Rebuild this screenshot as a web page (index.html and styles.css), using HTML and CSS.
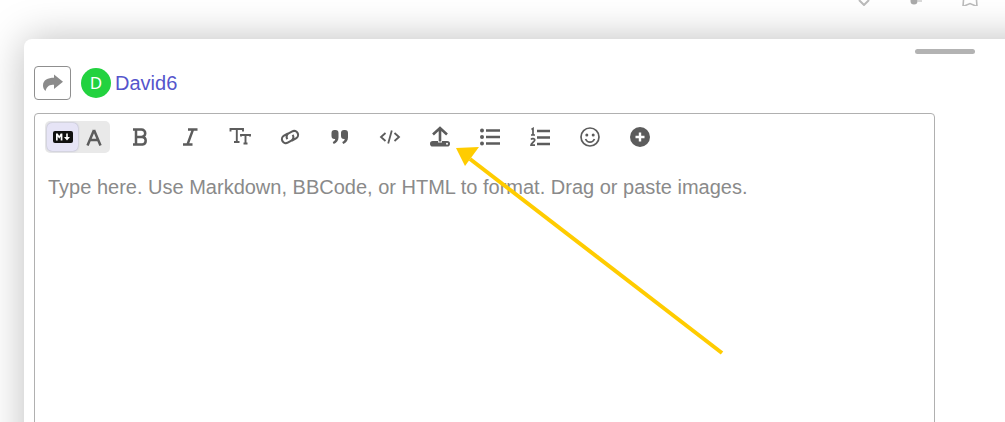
FILE: index.html
```html
<!DOCTYPE html>
<html lang="en">
<head>
<meta charset="utf-8">
<title>Composer</title>
<link rel="stylesheet" href="styles.css">
</head>
<body>
<div class="page">
  <div class="top-icons">
    <svg class="top-icon" width="16" height="6" viewBox="0 0 16 6"><path d="M3 0l5 5 5-5" fill="none" stroke="#bbb" stroke-width="2"/></svg>
    <svg class="top-icon" width="20" height="6" viewBox="0 0 20 6"><circle cx="10" cy="1" r="3.500" fill="#aaa"/><path d="M13 1h5" stroke="#ccc" stroke-width="1.500"/></svg>
    <svg class="top-icon star" width="18" height="6" viewBox="0 0 18 6"><path d="M2.500 0L2 6.500l7-3 7 3-.5-6.500" fill="none" stroke="#bbb" stroke-width="1.600"/></svg>
  </div>
  <section class="panel">
    <div class="grip"></div>
    <div class="head">
      <button class="reply-btn" type="button">
        <svg width="22" height="18" viewBox="0 0 22 18"><path d="M12 0.500l9 7.200-9 7.200v-4.200c-4 0-7 .8-8.500 6.300C1.800 15.500 1 13.500 1 11.500 1 6 6 3.800 12 3.800z" fill="#8b8b8b"/></svg>
      </button>
      <span class="avatar">D</span>
      <a class="user" href="#">David6</a>
    </div>
    <div class="editor">
      <div class="toolbar">
        <div class="mode-switch">
          <span class="mode mode-on">
            <svg width="20" height="12" viewBox="0 0 20 12"><rect width="20" height="12" rx="2" fill="#111"/><path d="M3 9.500V2.500h1.700L6.200 5l1.500-2.500h1.700v7H7.700V5.500L6.200 7.700 4.700 5.500v4z" fill="#fff"/><path d="M13.200 2.500h1.600V6H17l-3 3.500L11 6h2.200z" fill="#fff"/></svg>
          </span>
          <span class="mode">
            <svg width="18" height="18" viewBox="0 0 18 18"><path d="M9 2l6.500 15.500M9 2L2.500 17.500M5 12h8" fill="none" stroke="#5c5c5c" stroke-width="2.500"/></svg>
          </span>
        </div>
        <span class="tool tool-first"><svg width="20" height="20" viewBox="0 0 20 20"><path d="M3 2.500h8.500a3.700 3.700 0 0 1 0 7.500H6M6 10h6.500a3.800 3.800 0 0 1 0 7.500H3M6 2.500v15" fill="none" stroke="#5c5c5c" stroke-width="2.500"/></svg></span>
        <span class="tool"><svg width="20" height="20" viewBox="0 0 20 20"><path d="M8 2.500h9.500M3 17.500h9.500M13 2.500L7.500 17.500" fill="none" stroke="#5c5c5c" stroke-width="2.400"/></svg></span>
        <span class="tool"><svg width="22" height="20" viewBox="0 0 22 20"><path d="M1.500 4.500V2h12.500v2.500M7.800 2v13M5 15h5.500M12 9.500V8h9v1.500M16.500 8v8.500M14.500 16.500h4" fill="none" stroke="#5c5c5c" stroke-width="1.900"/></svg></span>
        <span class="tool"><svg width="22" height="20" viewBox="0 0 22 20"><path d="M9 6.500L5 8.700a3.900 3.900 0 0 0 3.700 6.900l3.700-2a3.900 3.900 0 0 0 1.200-5.800M13 13.500l4-2.200a3.900 3.900 0 0 0-3.700-6.900l-3.700 2a3.900 3.900 0 0 0-1.200 5.800" fill="none" stroke="#5c5c5c" stroke-width="2.100"/></svg></span>
        <span class="tool"><svg width="20" height="18" viewBox="0 0 20 18"><path d="M1.500 5a3 3 0 0 1 3-3h1a3 3 0 0 1 3 3v4.500c0 3-2 5.500-4.800 6.500l-1-2c1.500-.7 2.400-1.800 2.500-3H4.500a3 3 0 0 1-3-3zM11 5a3 3 0 0 1 3-3h1a3 3 0 0 1 3 3v4.500c0 3-2 5.500-4.800 6.500l-1-2c1.500-.7 2.400-1.800 2.500-3H14a3 3 0 0 1-3-3z" fill="#5c5c5c"/></svg></span>
        <span class="tool"><svg width="22" height="16" viewBox="0 0 22 16"><path d="M6.500 4L2 8l4.500 4M15.500 4L20 8l-4.500 4M12.800 1.500L9.200 14.500" fill="none" stroke="#5c5c5c" stroke-width="1.800"/></svg></span>
        <span class="tool"><svg width="22" height="22" viewBox="0 0 22 22"><path d="M4 8.500L11 2l7 6.500M11 3v12.500" fill="none" stroke="#5c5c5c" stroke-width="2.600"/><path d="M3.800 15H9v1.500h4V15h5.200a2.800 2.800 0 0 1 0 5.600H3.800a2.800 2.800 0 0 1 0-5.600z" fill="#5c5c5c"/><circle cx="18" cy="17.800" r="1" fill="#fff"/></svg></span>
        <span class="tool"><svg width="20" height="18" viewBox="0 0 20 18"><circle cx="2" cy="2.500" r="2" fill="#5c5c5c"/><circle cx="2" cy="9" r="2" fill="#5c5c5c"/><circle cx="2" cy="15.500" r="2" fill="#5c5c5c"/><path d="M6 2.500h14M6 9h14M6 15.500h14" stroke="#5c5c5c" stroke-width="2.400"/></svg></span>
        <span class="tool"><svg width="20" height="20" viewBox="0 0 20 20"><path d="M1.500 2.500L3 1.500V8M1 8h4M1 12.500c1-1.300 3.800-1 3.800.6 0 1.500-3.800 3-3.800 5h4" fill="none" stroke="#5c5c5c" stroke-width="1.700"/><path d="M7 4h13M7 10.500h13M7 17h13" stroke="#5c5c5c" stroke-width="2.400"/></svg></span>
        <span class="tool"><svg width="20" height="20" viewBox="0 0 20 20"><circle cx="10" cy="10" r="9" fill="none" stroke="#5c5c5c" stroke-width="1.700"/><circle cx="6.800" cy="8" r="1.500" fill="#5c5c5c"/><circle cx="13.200" cy="8" r="1.500" fill="#5c5c5c"/><path d="M5.500 12c1 2.200 2.600 3.200 4.500 3.200s3.500-1 4.500-3.200" fill="none" stroke="#5c5c5c" stroke-width="1.700"/></svg></span>
        <span class="tool"><svg width="20" height="20" viewBox="0 0 20 20"><circle cx="10" cy="10" r="10" fill="#5c5c5c"/><path d="M10 5.500v9M5.500 10h9" stroke="#fff" stroke-width="2.400"/></svg></span>
      </div>
      <div class="body-text">Type here. Use Markdown, BBCode, or HTML to format. Drag or paste images.</div>
    </div>
  </section>
  <svg class="arrow" width="1005" height="422" viewBox="0 0 1005 422">
    <path d="M722 353L470 159" fill="none" stroke="#ffcc00" stroke-width="4"/>
    <path d="M456 148l23-1-14 19z" fill="#ffcc00"/>
  </svg>
</div>
</body>
</html>
```
FILE: styles.css
```css
html, body {
  margin: 0;
  padding: 0;
  height: 100%;
  overflow: hidden;
  background: #fff;
  font-family: "Liberation Sans", Arial, sans-serif;
}
.page {
  position: relative;
  width: 1005px;
  height: 422px;
  overflow: hidden;
}
.top-icons {
  display: flex;
  justify-content: flex-end;
  align-items: flex-start;
  gap: 32px;
  height: 39px;
  padding-right: 26px;
  box-sizing: border-box;
}
.top-icon { display: block; }
.star { margin-left: 5px; }
.panel {
  margin-left: 24px;
  height: 500px;
  width: 1100px;
  background: #fff;
  border-radius: 8px;
  box-shadow: 0 0 40px rgba(0, 0, 0, 0.26);
  padding: 10px 0 0 10px;
  box-sizing: border-box;
  position: relative;
}
.grip {
  width: 60px;
  height: 5px;
  border-radius: 3px;
  background: #b3b3b3;
  margin-left: 881px;
}
.head {
  display: flex;
  align-items: center;
  margin-top: 12px;
  height: 34px;
}
.reply-btn {
  width: 37px;
  height: 34px;
  padding: 0;
  display: flex;
  align-items: center;
  justify-content: center;
  background: #fff;
  border: 1px solid #8f8f8f;
  border-radius: 4px;
  box-sizing: border-box;
}
.avatar {
  width: 30px;
  height: 30px;
  margin-left: 10px;
  border-radius: 50%;
  background: #22d23f;
  color: #fff;
  font-family: "Noto Sans", sans-serif;
  font-size: 17px;
  line-height: 30px;
  text-align: center;
}
.user {
  margin-left: 4px;
  color: #5555cc;
  font-size: 20px;
  text-decoration: none;
}
.editor {
  margin-top: 13px;
  width: 901px;
  height: 400px;
  border: 1px solid #b0b0b0;
  border-radius: 4px;
  box-sizing: border-box;
}
.toolbar {
  display: flex;
  align-items: center;
  height: 32px;
  margin: 7px 0 0 10px;
}
.mode-switch {
  display: flex;
  align-items: center;
  width: 65px;
  height: 32px;
  background: #e9e9e9;
  border-radius: 5px;
  padding-left: 2px;
  box-sizing: border-box;
}
.mode {
  width: 31px;
  height: 28px;
  display: flex;
  align-items: center;
  justify-content: center;
}
.mode-on {
  background: #e6e4f6;
  border-radius: 5px;
  box-shadow: 0 0 2px rgba(80, 80, 160, 0.5);
}
.tool {
  width: 50px;
  flex: none;
  display: flex;
  align-items: center;
  justify-content: center;
}
.tool-first { margin-left: 5px; }
.body-text {
  margin: 20px 0 0 13px;
  font-size: 20px;
  line-height: 28px;
  color: #8a8a8a;
}
.arrow {
  position: absolute;
  left: 0;
  top: 0;
  pointer-events: none;
}
```
